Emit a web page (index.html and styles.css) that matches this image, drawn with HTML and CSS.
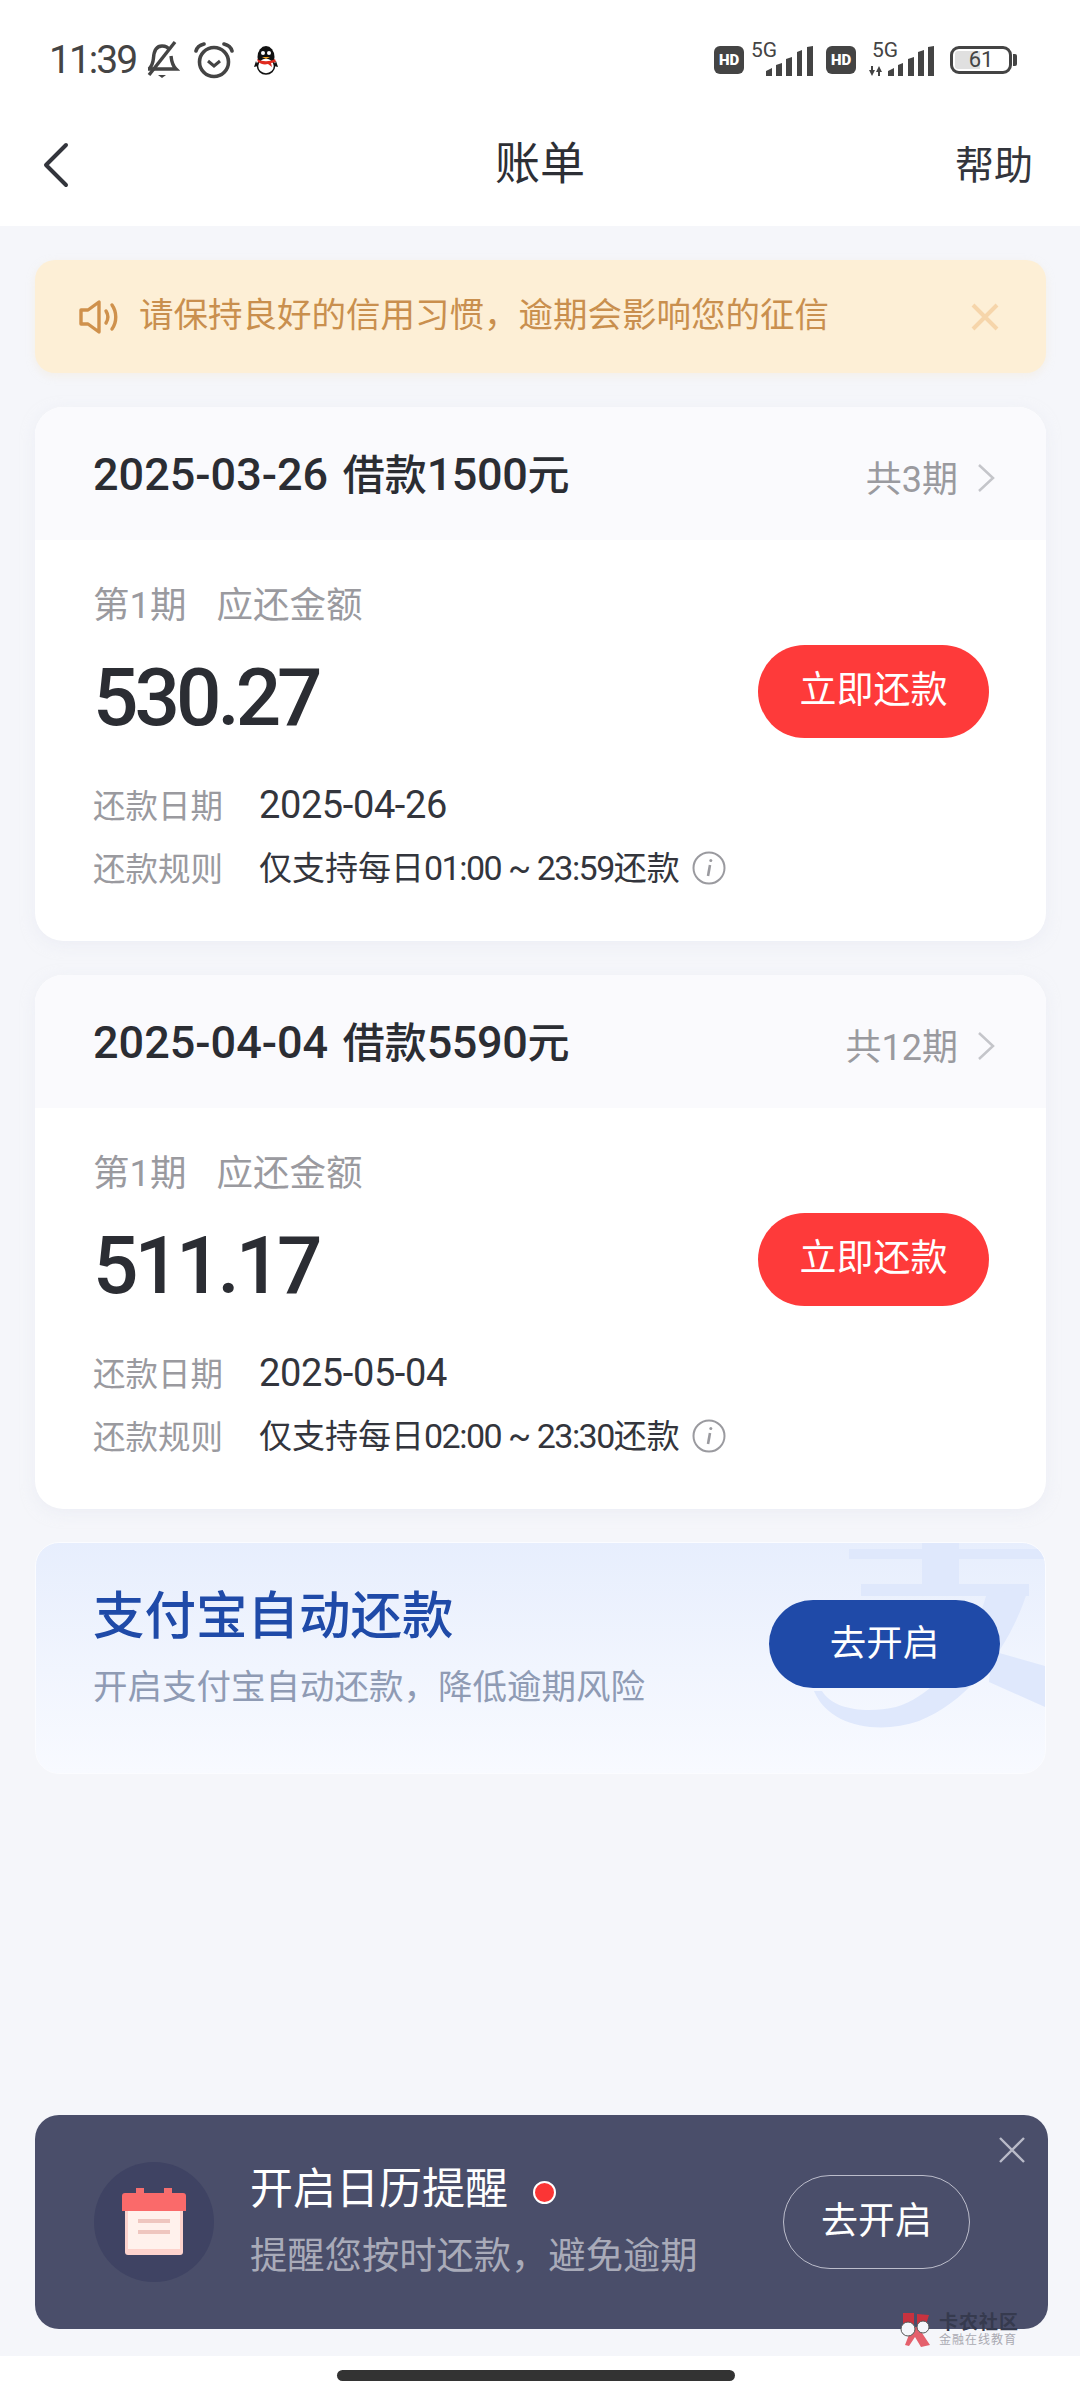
FILE: index.html
```html
<!DOCTYPE html>
<html>
<head>
<meta charset="UTF-8">
<title>账单</title>
<link rel="stylesheet" href="styles.css">
</head>
<body>
<div class="page">

<div class="top">
  <div class="status">
    <span class="time">11:39</span>
    <svg class="ico-bell" width="36" height="40" viewBox="0 0 36 40" fill="none" stroke="#444" stroke-width="3.4"><path d="M5 29c3-3 4-6 4.500-11C10 10 13 6 18 6c3 0 6 1 7.500 4M27 16c.5 5 1 9 5 13H4"/><path d="M5 35L31 2"/><path d="M14 35h8l-4 3z" fill="#444" stroke="none"/></svg>
    <svg class="ico-alarm" width="40" height="40" viewBox="0 0 40 40" fill="none" stroke="#444" stroke-width="3.6"><circle cx="20" cy="22" r="14.500"/><path d="M14 21l6 5 6-5" stroke-width="3"/><path d="M2 11c1-4 4-6 8-7M38 11c-1-4-4-6-8-7" stroke-linecap="round"/></svg>
    <svg class="ico-qq" width="24" height="30" viewBox="0 0 24 30"><ellipse cx="12" cy="12" rx="8.500" ry="11" fill="#111"/><ellipse cx="12" cy="21" rx="8.500" ry="8" fill="#fff" stroke="#111" stroke-width="1.500"/><path d="M3 14c5 3 13 3 18 0l1 3-5 1 1 4-4-3c-4 1-7 0-10-2z" fill="#e02a1f"/><circle cx="9" cy="8" r="2" fill="#fff"/><circle cx="15" cy="8" r="2" fill="#fff"/><path d="M8 12h8l-4 2z" fill="#f5a623"/><path d="M2 16l-2 6 4-1zM22 16l2 6-4-1z" fill="#111"/></svg>
    <span class="status-right">
      <span class="hd">HD</span>
      <span class="net net-a">
        <span class="net-txt">5G</span>
        <svg width="47" height="30" viewBox="0 0 47 30" fill="#444"><path d="M0 25l6-3v8H0zM10 19l6-2v13h-6zM20 13l6-2v19h-6zM31 6l5-2v26h-5zM41 1l6-1v30h-6z"/></svg>
      </span>
      <span class="hd">HD</span>
      <span class="net net-b">
        <span class="net-txt">5G</span>
        <svg width="67" height="30" viewBox="0 0 67 30" fill="#444"><path d="M3 20h2v4h2l-3 6-3-6h2zM10 30v-4H8l3-6 3 6h-2v4z"/><path d="M20 25l6-3v8h-6zM30 19l5-2v13h-5zM40 13l6-2v19h-6zM50 6l6-2v26h-6zM60 1l6-1v30h-6z"/></svg>
      </span>
      <span class="batt"><span class="batt-fill"></span><span class="batt-num">61</span></span>
      <span class="batt-nub"></span>
    </span>
  </div>
  <div class="nav">
    <svg class="back" width="26" height="46" viewBox="0 0 26 46" fill="none" stroke="#33353c" stroke-width="4" stroke-linecap="round" stroke-linejoin="round"><path d="M23 3L3 23l20 20"/></svg>
    <span class="nav-title">账单</span>
    <span class="nav-help">帮助</span>
  </div>
</div>

<div class="main">
  <div class="notice">
    <svg class="notice-ico" width="40" height="34" viewBox="0 0 40 34" fill="none" stroke="#cf914c" stroke-width="3.400" stroke-linejoin="round" stroke-linecap="round"><path d="M2 10h7l11-8v30L9 24H2z"/><path d="M27 11c2.500 4 2.500 8 0 12"/><path d="M33 5c5 7 5 17 0 24"/></svg>
    <span class="notice-txt">请保持良好的信用习惯，逾期会影响您的征信</span>
    <svg class="notice-x" width="28" height="28" viewBox="0 0 28 28" stroke="#f6d5aa" stroke-width="4"><path d="M2 2l24 24M26 2L2 26"/></svg>
  </div>

  <div class="card">
    <div class="card-head">
      <span class="loan"><span class="d">2025-03-26</span> 借款<span class="n">1500</span>元</span>
      <span class="terms">共3期</span>
      <svg class="more" width="18" height="28" viewBox="0 0 18 28" fill="none" stroke="#c4c5ca" stroke-width="2.500"><path d="M2 1l14 13L2 27"/></svg>
    </div>
    <div class="card-body">
      <div class="due">第1期<i></i>应还金额</div>
      <div class="pay-row">
        <span class="amount">530.27</span>
        <span class="btn-red">立即还款</span>
      </div>
      <div class="rows">
        <div class="row"><span class="row-k">还款日期</span><span class="row-d">2025-04-26</span></div>
        <div class="row"><span class="row-k">还款规则</span><span class="row-v">仅支持每日<span class="t">01:00 ~ 23:59</span>还款</span>
          <svg class="info" width="34" height="34" viewBox="0 0 34 34" fill="none" stroke="#9a9a9f" stroke-width="2"><circle cx="17" cy="17" r="15.500"/><path d="M18 14l-2 11" stroke-width="2.600"/><circle cx="18.800" cy="9.500" r="1.500" fill="#9a9a9f" stroke="none"/></svg>
        </div>
      </div>
    </div>
  </div>

  <div class="card">
    <div class="card-head">
      <span class="loan"><span class="d">2025-04-04</span> 借款<span class="n">5590</span>元</span>
      <span class="terms">共12期</span>
      <svg class="more" width="18" height="28" viewBox="0 0 18 28" fill="none" stroke="#c4c5ca" stroke-width="2.500"><path d="M2 1l14 13L2 27"/></svg>
    </div>
    <div class="card-body">
      <div class="due">第1期<i></i>应还金额</div>
      <div class="pay-row">
        <span class="amount">511.17</span>
        <span class="btn-red">立即还款</span>
      </div>
      <div class="rows">
        <div class="row"><span class="row-k">还款日期</span><span class="row-d">2025-05-04</span></div>
        <div class="row"><span class="row-k">还款规则</span><span class="row-v">仅支持每日<span class="t">02:00 ~ 23:30</span>还款</span>
          <svg class="info" width="34" height="34" viewBox="0 0 34 34" fill="none" stroke="#9a9a9f" stroke-width="2"><circle cx="17" cy="17" r="15.500"/><path d="M18 14l-2 11" stroke-width="2.600"/><circle cx="18.800" cy="9.500" r="1.500" fill="#9a9a9f" stroke="none"/></svg>
        </div>
      </div>
    </div>
  </div>

  <div class="auto">
    <svg class="auto-mark" width="1010" height="232" viewBox="36 1543 1010 232" fill="#dfe8fc">
      <path d="M850 1550H1046V1560H850z"/>
      <path d="M923 1543H960V1590H923z"/>
      <path d="M862 1585H1030V1597H862z"/>
      <path d="M1030 1587C1015 1640 975 1700 920 1722C880 1736 830 1728 815 1692H823C835 1712 870 1714 897 1708C930 1698 950 1670 963 1652C975 1630 982 1615 987 1597z"/>
      <path d="M993 1652L1046 1667V1708L990 1683z"/>
    </svg>
    <div class="auto-txt">
      <div class="auto-title">支付宝自动还款</div>
      <div class="auto-sub">开启支付宝自动还款，降低逾期风险</div>
    </div>
    <span class="btn-blue">去开启</span>
  </div>

  <div class="remind">
    <svg class="remind-x" width="26" height="26" viewBox="0 0 26 26" stroke="#b9bac8" stroke-width="2.400"><path d="M1 1l24 24M25 1L1 25"/></svg>
    <span class="cal-wrap">
      <svg width="64" height="68" viewBox="0 0 64 68">
        <path d="M14 0h8v6h-8zM42 0h8v6h-8z" fill="#f46e6e"/>
        <rect x="3" y="20" width="58" height="47" rx="3" fill="#fdd3cd"/>
        <rect x="6" y="20" width="52" height="41" fill="#fff1ec"/>
        <path d="M3 5h58q3 0 3 3v15H0V8q0-3 3-3z" fill="#fa6a6a"/>
        <path d="M16 31h32v4H16zM16 42h32v4H16z" fill="#efc6bf"/>
      </svg>
    </span>
    <div class="remind-txt">
      <div class="remind-title">开启日历提醒<span class="dot"></span></div>
      <div class="remind-sub">提醒您按时还款，避免逾期</div>
    </div>
    <span class="btn-line">去开启</span>
  </div>
</div>

<div class="foot"><span class="home"></span></div>

<div class="mark">
  <svg width="36" height="36" viewBox="0 0 36 36">
    <path d="M3 1h11v14H3zM17 2l12 1-4 13h-8z" fill="#c8323f"/>
    <path d="M12 15l6 0 12 18-9 2-6-10-6 9-4-1z" fill="#e4606c"/>
    <circle cx="8" cy="17" r="7" fill="#f5f6fa" stroke="#555" stroke-width="1"/>
    <circle cx="23" cy="15" r="6" fill="#f5f6fa" stroke="#555" stroke-width="1"/>
  </svg>
  <div>
    <div class="mark-a">卡农社区</div>
    <div class="mark-b">金融在线教育</div>
  </div>
</div>

</div>
</body>
</html>
```

FILE: styles.css
```css
*{ box-sizing:border-box; margin:0; padding:0; }
html,body{ width:1080px; height:2400px; overflow:hidden; }
body{ font-family:Roboto,"Noto Sans CJK SC",sans-serif; color:#2d2f35; background:#fff; }
i{ font-style:normal; }

.page{ position:relative; width:1080px; height:2400px; display:flex; flex-direction:column; }

/* top */
.top{ height:226px; background:#fff; }
.status{ height:105px; display:flex; align-items:center; padding:15px 0 0 49px; }
.time{ font-size:39px; line-height:44px; letter-spacing:-2px; color:#444; width:95px; }
.ico-bell{ display:block; }
.ico-alarm{ display:block; margin-left:14px; }
.ico-qq{ display:block; margin-left:20px; }
.status-right{ margin-left:auto; margin-right:63px; display:flex; align-items:center; }
.hd{ width:30px; height:28px; border-radius:6px; background:#444; color:#fff; font-size:15px; line-height:28px; font-weight:900; text-align:center; }
.net{ position:relative; display:block; height:32px; }
.net-a{ width:62px; margin:0 13px 0 7px; }
.net-b{ width:67px; margin:0 15px 0 12px; }
.net svg{ position:absolute; right:0; bottom:0; display:block; }
.net-txt{ position:absolute; left:0; top:-4px; font-size:21px; line-height:20px; color:#444; }
.net-b .net-txt{ left:4px; }
.batt{ position:relative; width:62px; height:28px; border:3px solid #444; border-radius:9px; }
.batt-fill{ position:absolute; left:2px; top:2px; bottom:2px; width:25px; border-radius:3px 0 0 3px; background:#e0e0e0; }
.batt-num{ position:absolute; left:0; right:0; top:0; text-align:center; font-size:22px; line-height:22px; color:#444; }
.batt-nub{ width:4px; height:12px; margin-left:1px; border-radius:0 2px 2px 0; background:#444; }

.nav{ height:121px; display:flex; align-items:center; position:relative; padding:0 47px 0 43px; }
.back{ display:block; margin-top:-2px; }
.nav-title{ position:absolute; left:0; right:0; text-align:center; font-size:45px; line-height:60px; color:#2d2f35; margin-top:-2px; }
.nav-help{ margin-left:auto; font-size:39px; line-height:60px; color:#33353c; }

/* main */
.main{ flex:1; background:#f5f6fa; padding:34px 34px 27px 35px; display:flex; flex-direction:column; }

.notice{ height:113px; border-radius:20px; background:#fdefd6; display:flex; align-items:center; padding:0 47px 0 44px; box-shadow:0 3px 8px rgba(240,225,200,.35); }
.notice-ico{ display:block; }
.notice-txt{ margin:-4px 0 0 20px; font-size:34.500px; line-height:50px; color:#c98f4e; }
.notice-x{ display:block; margin-left:auto; }

.card{ margin-top:34px; height:534px; border-radius:28px; background:#fff; overflow:hidden; box-shadow:0 4px 14px rgba(230,232,242,.5); }
.card-head{ height:133px; background:#fafafd; display:flex; align-items:center; padding:0 51px 0 58px; }
.loan{ margin-top:4px; font-size:42px; line-height:60px; font-weight:500; color:#2b2d33; }
.loan .d{ font-size:45px; margin-right:4px; }
.loan .n{ font-size:45px; letter-spacing:-.4px; }
.terms{ margin:12px 0 0 auto; font-size:36px; line-height:50px; color:#9a9a9f; }
.more{ display:block; margin:8px 0 0 19px; }

.card-body{ padding:41px 58px 0 58px; }
.due{ font-size:36.500px; line-height:50px; color:#9a9a9f; }
.due i{ display:inline-block; width:30px; }
.pay-row{ margin-top:14px; height:93px; display:flex; align-items:center; justify-content:space-between; }
.amount{ font-size:80px; line-height:93px; font-weight:500; letter-spacing:-4px; color:#2b2d33; padding-top:14px; }
.btn-red{ width:231px; height:93px; margin-right:-1px; border-radius:47px; background:#fe3a3a; color:#fff; font-size:37px; line-height:91px; text-align:center; }
.rows{ margin-top:35px; }
.row{ height:63px; display:flex; align-items:center; }
.row-k{ width:166px; margin-top:-3px; font-size:32.500px; color:#9a9a9f; }
.row-d{ font-size:38px; letter-spacing:-.4px; color:#33353c; }
.row-v{ margin-top:-3px; font-size:33px; color:#33353c; }
.row-v .t{ font-size:34px; letter-spacing:-1.500px; }
.info{ display:block; margin-left:12px; }

.auto{ position:relative; margin-top:33px; height:232px; border:1px solid #fbfcff; border-radius:24px; overflow:hidden; display:flex; align-items:flex-start; padding:0 45px 0 57px; background:linear-gradient(180deg,#e7eefd 0%,#f1f5fe 55%,#f8faff 100%); }
.auto-mark{ position:absolute; left:-1px; top:-1px; display:block; }
.auto-txt{ position:relative; padding-top:39px; }
.auto-title{ font-size:51.500px; line-height:70px; font-weight:500; color:#1f4aa8; }
.auto-sub{ margin-top:10px; font-size:34.500px; line-height:50px; color:#8f9bb4; }
.btn-blue{ position:relative; margin:57px 0 0 auto; width:231px; height:88px; border-radius:44px; background:#1f4aa8; color:#fff; font-size:36.500px; line-height:88px; text-align:center; }

.remind{ position:relative; margin-top:auto; margin-right:-2px; height:214px; border-radius:24px; background:#4a4e6a; display:flex; align-items:center; padding:0 78px 0 59px; }
.remind-x{ position:absolute; right:23px; top:22px; display:block; }
.cal-wrap{ width:120px; height:120px; border-radius:50%; background:#3f4363; display:flex; align-items:center; justify-content:center; }
.cal-wrap svg{ display:block; }
.remind-txt{ margin-left:36px; }
.remind-title{ display:flex; align-items:center; font-size:43px; line-height:60px; color:#fff; margin-top:-2px; }
.dot{ width:23px; height:23px; margin:6px 0 0 25px; border-radius:50%; background:#fb3535; border:2px solid #fff; }
.remind-sub{ margin-top:10px; font-size:37.300px; line-height:54px; color:#a9abb9; }
.btn-line{ margin-left:auto; width:187px; height:94px; border:1px solid #bcbdcb; border-radius:47px; color:#fff; font-size:37px; line-height:92px; text-align:center; }

/* bottom */
.foot{ height:44px; background:#fff; padding:14px 0 0 337px; }
.home{ display:block; width:398px; height:11px; border-radius:6px; background:#333; }

.mark{ position:absolute; left:900px; top:2312px; display:flex; gap:3px; }
.mark svg{ display:block; }
.mark-a{ font-size:19px; line-height:21px; font-weight:700; color:#363a4e; letter-spacing:1px; }
.mark-b{ font-size:12px; line-height:15px; color:#aaaab2; letter-spacing:1px; }
```
